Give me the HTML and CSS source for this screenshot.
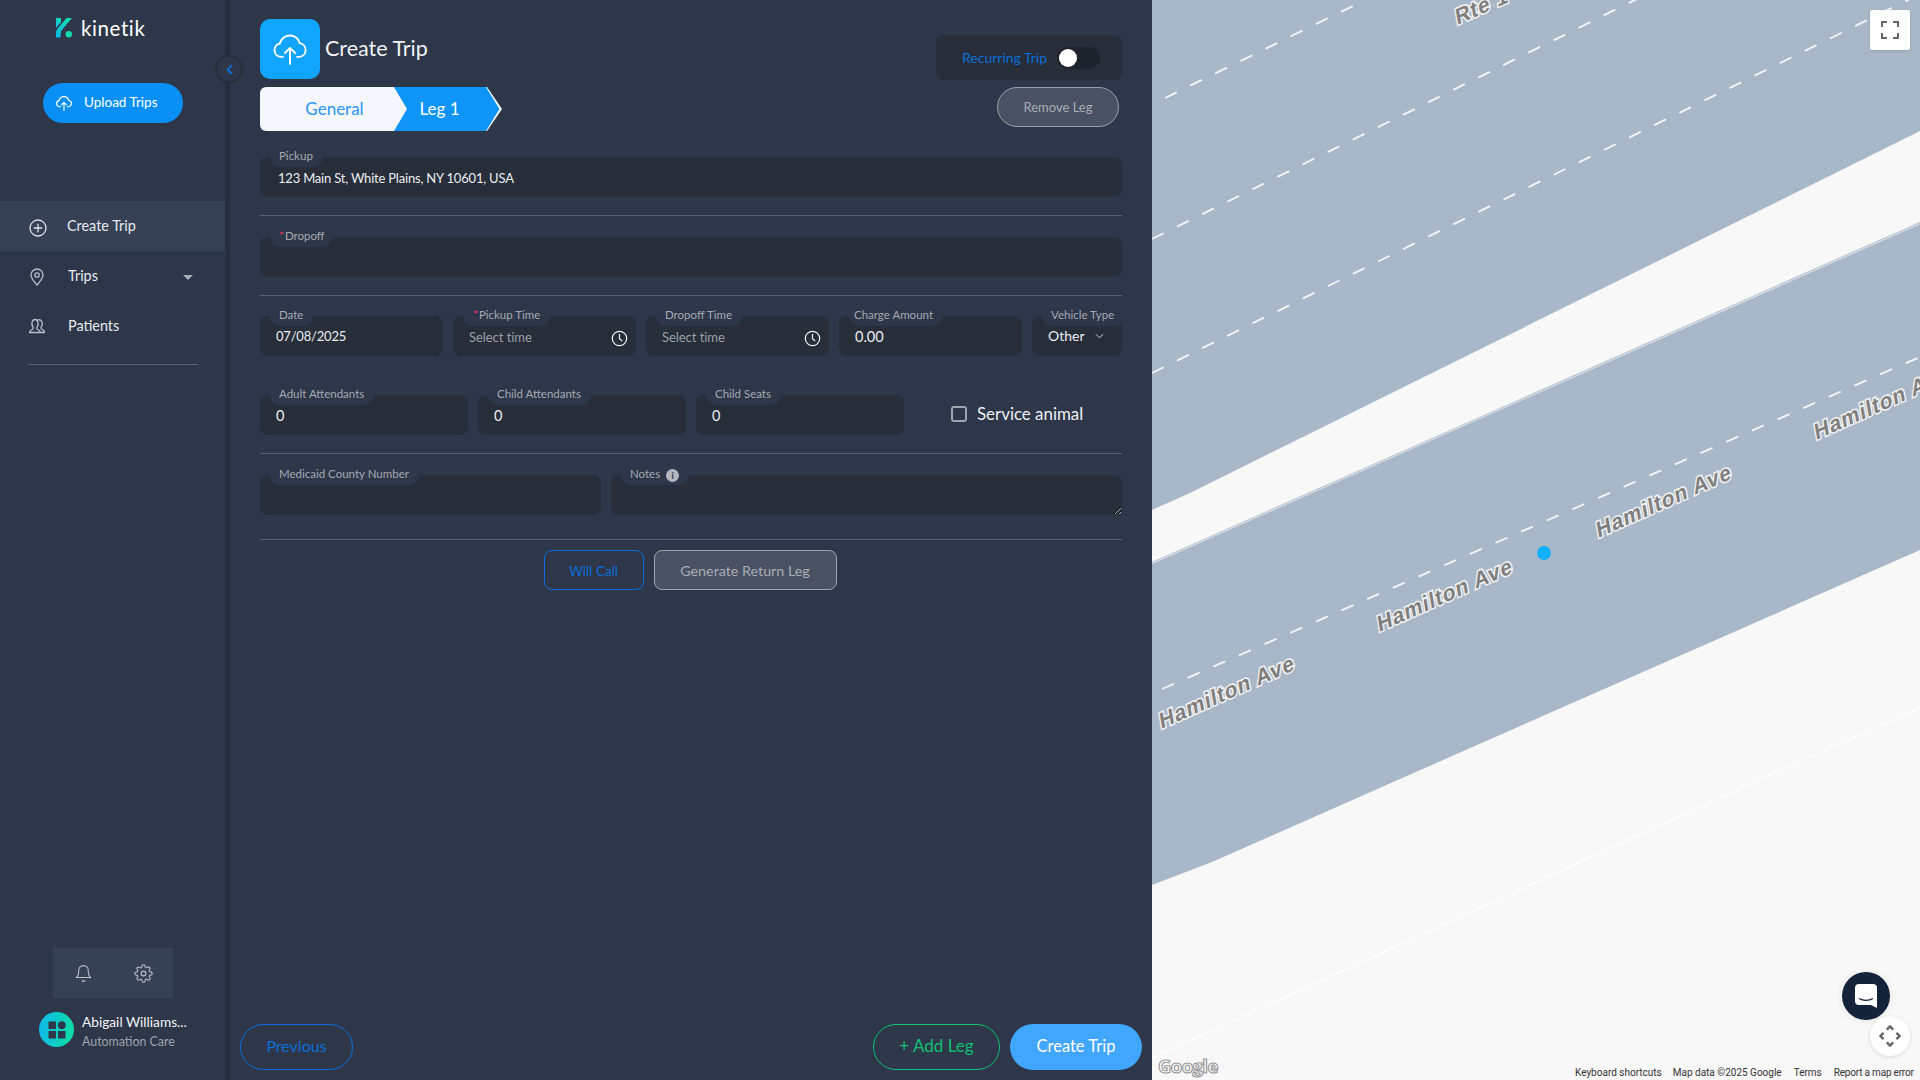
FILE: index.html
```html
<!DOCTYPE html>
<html lang="en">
<head>
<meta charset="utf-8">
<title>Create Trip</title>
<link rel="stylesheet" href="styles.css">
</head>
<body>
<div class="app">
  <aside class="sidebar">
    <div class="logo">
      <svg class="logo-mark" viewBox="0 0 16 20" width="16" height="20">
        <defs><linearGradient id="lg" x1="0" y1="0" x2="0" y2="1"><stop offset="0" stop-color="#10e0b0"/><stop offset="1" stop-color="#10b4e8"/></linearGradient></defs>
        <path d="M0 0h5v4.500L0 10z" fill="url(#lg)"/>
        <path d="M10.500 0H16L5.500 12.500C4.800 13.500 4.600 16 4.600 19.500H0V15.500C0 13 1 11.200 2.600 9.600z" fill="url(#lg)"/>
        <circle cx="12.800" cy="16.200" r="3.200" fill="#10dcb0"/>
      </svg>
      <span class="logo-text">kinetik</span>
    </div>
    <button class="upload-btn">
      <svg viewBox="0 0 24 24" width="18" height="18" class="ico"><path d="M7.500 17H6.300a4.300 4.300 0 0 1-.7-8.500 6.500 6.500 0 0 1 12.600-.2A4.400 4.400 0 0 1 18 17h-1.500"/><path d="M12 21.500V11.500M8.800 14.500 12 11.300l3.200 3.200"/></svg>
      <span>Upload Trips</span>
    </button>
    <nav class="nav">
      <a class="nav-item active">
        <svg viewBox="0 0 18 18" width="18" height="18" class="ico nav-ico plus"><circle cx="9" cy="9" r="8"/><path d="M9 5.200v7.600M5.200 9h7.600"/></svg>
        <span>Create Trip</span>
      </a>
      <a class="nav-item">
        <svg viewBox="0 0 18 18" width="18" height="18" class="ico nav-ico pin"><path d="M9 17c-3-3.600-6-6.500-6-10a6 6 0 0 1 12 0c0 3.500-3 6.400-6 10z"/><circle cx="9" cy="7" r="2.200"/></svg>
        <span>Trips</span>
        <i class="caret"></i>
      </a>
      <a class="nav-item">
        <svg viewBox="0 0 18 18" width="18" height="18" class="ico nav-ico people"><path d="M1.500 15.500c0-2 1.800-2.500 3.500-3.500.5-.8.3-1.500-.3-2.300C3 7 4 2.500 7 2.500s4 4.500 2.300 7.200c-.6.800-.8 1.500-.3 2.300 1.700 1 3.500 1.500 3.500 3.500z"/><path d="M9.500 3c3-1 5 1 4.800 4-.1 1.400-.7 2.200-1.100 2.900-.4.800-.3 1.500.3 2.100 1.500.9 3 1.300 3 3.500h-3.500"/></svg>
        <span>Patients</span>
      </a>
    </nav>
    <div class="side-rule"></div>
    <div class="side-bottom">
      <div class="side-tools">
        <svg viewBox="0 0 24 24" width="19" height="19" class="ico tool"><path d="M18 8A6 6 0 0 0 6 8c0 7-3 9-3 9h18s-3-2-3-9"/><path d="M13.730 21a2 2 0 0 1-3.460 0"/></svg>
        <svg viewBox="0 0 24 24" width="19" height="19" class="ico tool"><path d="M12 15a3 3 0 1 0 0-6 3 3 0 0 0 0 6z"/><path d="M19.4 15a1.65 1.65 0 0 0 .33 1.82l.06.06a2 2 0 0 1 0 2.83 2 2 0 0 1-2.83 0l-.06-.06a1.65 1.65 0 0 0-1.82-.33 1.65 1.65 0 0 0-1 1.51V21a2 2 0 0 1-2 2 2 2 0 0 1-2-2v-.09A1.65 1.65 0 0 0 9 19.4a1.65 1.65 0 0 0-1.82.33l-.06.06a2 2 0 0 1-2.83 0 2 2 0 0 1 0-2.83l.06-.06a1.65 1.65 0 0 0 .33-1.82 1.65 1.65 0 0 0-1.51-1H3a2 2 0 0 1-2-2 2 2 0 0 1 2-2h.09A1.65 1.65 0 0 0 4.6 9a1.65 1.65 0 0 0-.33-1.82l-.06-.06a2 2 0 0 1 0-2.83 2 2 0 0 1 2.83 0l.06.06a1.65 1.65 0 0 0 1.82.33H9a1.65 1.65 0 0 0 1-1.51V3a2 2 0 0 1 2-2 2 2 0 0 1 2 2v.09a1.65 1.65 0 0 0 1 1.51 1.65 1.65 0 0 0 1.82-.33l.06-.06a2 2 0 0 1 2.83 0 2 2 0 0 1 0 2.83l-.06.06a1.65 1.65 0 0 0-.33 1.82V9a1.65 1.65 0 0 0 1.51 1H21a2 2 0 0 1 2 2 2 2 0 0 1-2 2h-.09a1.65 1.65 0 0 0-1.51 1z"/></svg>
      </div>
      <div class="user">
        <div class="avatar">
          <svg viewBox="0 0 18 18" width="18" height="18"><rect x="0.500" y="0.500" width="7.500" height="7.500" fill="#2e3749"/><circle cx="13.800" cy="4.200" r="3.900" fill="#2e3749"/><rect x="0.500" y="10" width="7.500" height="7.500" fill="#2e3749"/><rect x="10" y="10" width="7.500" height="7.500" fill="#2e3749"/></svg>
        </div>
        <div class="user-text">
          <div class="user-name">Abigail Williams...</div>
          <div class="user-org">Automation Care</div>
        </div>
      </div>
    </div>
    <button class="collapse" aria-label="Collapse"><svg viewBox="0 0 8 12" width="7" height="11"><path d="M6.500 1 2 6l4.500 5" fill="none" stroke="#0b6ed8" stroke-width="2.200"/></svg></button>
  </aside>

  <main class="panel">
    <div class="form">
      <header class="head">
        <div class="title-wrap">
          <div class="title-icon">
            <svg viewBox="0 0 24 24" width="38" height="38" class="ico"><path d="M7.500 17H6.300a4.300 4.300 0 0 1-.7-8.500 6.500 6.500 0 0 1 12.600-.2A4.400 4.400 0 0 1 18 17h-1.500" stroke-width="1.200"/><path d="M12 21.500V11.500M8.800 14.500 12 11.300l3.200 3.200" stroke-width="1.200"/></svg>
          </div>
          <h1 class="title">Create Trip</h1>
        </div>
        <div class="recurring">
          <span>Recurring Trip</span>
          <span class="toggle"><i class="knob"></i></span>
        </div>
      </header>
      <div class="tabs-row">
        <div class="tabs">
          <div class="tab tab-general">General</div>
          <div class="tab tab-leg"><span>Leg 1</span></div>
        </div>
        <button class="remove-leg">Remove Leg</button>
      </div>

      <div class="field first">
        <label class="lab">Pickup</label>
        <input class="inp inp-wide" value="123 Main St, White Plains, NY 10601, USA">
      </div>
      <div class="divider"></div>
      <div class="field">
        <label class="lab lab-drop"><b>*</b>Dropoff</label>
        <input class="inp inp-wide">
      </div>
      <div class="divider"></div>

      <div class="row row-a">
        <div class="field"><label class="lab">Date</label><input class="inp" value="07/08/2025"></div>
        <div class="field"><label class="lab lab-req"><b>*</b> Pickup Time</label><input class="inp inp-time" placeholder="Select time">
          <svg viewBox="0 0 18 18" width="17" height="17" class="ico clock"><circle cx="9" cy="9" r="7.600"/><path d="M9 4.500V9.300l2.500 2"/></svg></div>
        <div class="field"><label class="lab">Dropoff Time</label><input class="inp inp-time" placeholder="Select time">
          <svg viewBox="0 0 18 18" width="17" height="17" class="ico clock"><circle cx="9" cy="9" r="7.600"/><path d="M9 4.500V9.300l2.500 2"/></svg></div>
        <div class="field"><label class="lab lab-charge">Charge Amount</label><input class="inp inp-num" value="0.00"></div>
        <div class="field"><label class="lab">Vehicle Type</label><div class="inp select">Other
          <svg viewBox="0 0 10 6" width="9" height="6"><path d="M1 1l4 4 4-4" fill="none" stroke="#e4e6ea" stroke-width="1"/></svg></div></div>
      </div>

      <div class="row row-b">
        <div class="field"><label class="lab">Adult Attendants</label><input class="inp inp-num" value="0"></div>
        <div class="field"><label class="lab">Child Attendants</label><input class="inp inp-num" value="0"></div>
        <div class="field"><label class="lab">Child Seats</label><input class="inp inp-num" value="0"></div>
        <label class="check"><input type="checkbox" class="box"><span>Service animal</span></label>
      </div>
      <div class="divider"></div>

      <div class="row row-c">
        <div class="field"><label class="lab">Medicaid County Number</label><input class="inp"></div>
        <div class="field"><label class="lab lab-notes">Notes <i class="info">i</i></label><textarea class="inp area"></textarea></div>
      </div>
      <div class="divider tight"></div>

      <div class="actions">
        <button class="btn-willcall">Will Call</button>
        <button class="btn-return">Generate Return Leg</button>
      </div>
    </div>
    <footer class="foot">
      <button class="pill pill-prev">Previous</button>
      <div class="foot-right">
        <button class="pill pill-add">+ Add Leg</button>
        <button class="pill pill-create">Create Trip</button>
      </div>
    </footer>
  </main>

  <section class="map">
    <svg class="map-art" viewBox="0 0 768 1080" width="768" height="1080">
      <rect width="768" height="1080" fill="#a9b8c9"/>
      <path d="M0 510 38 493 768 131V222L0 562z" fill="#f8f8f8"/>
      <path d="M0 563.500 768 223.500" stroke="#dbe1e8" stroke-width="1.200" fill="none"/>
      <path d="M0 885 60 862 291 760 768 550V1080H0z" fill="#f8f8f8"/>
      <path d="M0 1058 88 1018 655 758 768 708" stroke="#fff" stroke-width="1.200" fill="none"/>
      <g class="dash">
        <path d="M13 98 205 4"/>
        <path d="M0 239 487 -2"/>
        <path d="M0 373 760 -2"/>
        <path d="M10 689 768 357"/>
      </g>
      <g class="road-text">
        <text transform="translate(9 729) rotate(-24) skewX(-14)">Hamilton Ave</text>
        <text transform="translate(227 632) rotate(-24) skewX(-14)">Hamilton Ave</text>
        <text transform="translate(446 538) rotate(-24) skewX(-14)">Hamilton Ave</text>
        <text transform="translate(664 440) rotate(-24) skewX(-14)">Hamilton Ave</text>
        <text transform="translate(305 25) rotate(-24) skewX(-14)">Rte 1</text>
      </g>
      <circle cx="392" cy="553" r="7" fill="#12b0ff"/>
    </svg>
    <button class="fullscreen" aria-label="Fullscreen"><svg viewBox="0 0 18 18" width="18" height="18"><path d="M0 6V0h6v2H2v4zM12 0h6v6h-2V2h-4zM0 12h2v4h4v2H0zM16 12h2v6h-6v-2h4z" fill="#666"/></svg></button>
    <button class="chat" aria-label="Chat"><svg viewBox="0 0 22 24" width="22" height="24"><path d="M4 0h14a4 4 0 0 1 4 4v20l-6-3H4a4 4 0 0 1-4-4V4a4 4 0 0 1 4-4z" fill="#fff"/><path d="M4 14.500c4 2.500 10 2.500 14 0" fill="none" stroke="#14233a" stroke-width="1.300"/></svg></button>
    <button class="pan" aria-label="Pan"><svg viewBox="0 0 24 24" width="22" height="22"><path d="M8.500 5 12 1.500 15.500 5M5 8.500 1.500 12 5 15.500M19 8.500 22.500 12 19 15.500M8.500 19 12 22.500 15.500 19" fill="none" stroke="#666" stroke-width="2.600"/></svg></button>
    <div class="google">Google</div>
    <div class="attr">
      <span class="a1">Keyboard shortcuts</span>
      <span class="a2">Map data ©2025 Google</span>
      <span class="a3">Terms</span>
      <span class="a4">Report a map error</span>
    </div>
  </section>
</div>
</body>
</html>
```
FILE: styles.css
```css
* { box-sizing: border-box; }
html, body { margin: 0; padding: 0; height: 100%; overflow: hidden; }
body { font-family: "Lato", "Noto Sans", sans-serif; background: #2e3749; color: #e8eaee; }
button, input, textarea { font-family: inherit; }
.app { display: flex; width: 1920px; height: 1080px; }
.ico { fill: none; stroke: currentColor; stroke-width: 1.500; stroke-linecap: round; stroke-linejoin: round; }

/* sidebar */
.sidebar { position: relative; width: 230px; flex: none; height: 100%; border-right: 5px solid #272e3b; background: #2e3749; display: flex; flex-direction: column; }
.logo { display: flex; align-items: center; gap: 9px; margin: 18px 0 0 56px; height: 20px; }
.logo-mark { flex: none; }
.logo-text { font-size: 20.500px; font-weight: 400; color: #fff; letter-spacing: .6px; line-height: 20px; }
.upload-btn { margin: 45px 0 0 43px; width: 140px; height: 40px; border: 0; border-radius: 20px; background: #0a90f5; color: #fff; font-size: 13.500px; display: flex; align-items: center; padding: 0 0 0 12px; gap: 11px; }
.upload-btn span { position: relative; top: -1px; }
.nav { margin-top: 78px; display: flex; flex-direction: column; }
.nav-item { display: flex; align-items: center; height: 50px; padding-left: 28px; font-size: 14.400px; color: #e8eaee; position: relative; }
.nav-item.active { background: #364156; }
.nav-item span { margin-left: 22px; position: relative; top: -1px; }
.nav-ico { flex: none; color: #dfe2e7; stroke-width: 1.300; position: relative; top: 1px; }
.nav-item .plus { top: 2px; left: 1px; }
.nav-item .plus + span { margin-left: 21px; }
.nav-item .pin { color: #b9bec7; }
.nav-item .people { color: #b9bec7; top: 0; }
.caret { position: absolute; left: 183px; top: 24px; border-left: 5px solid transparent; border-right: 5px solid transparent; border-top: 5px solid #a8adb6; }
.side-rule { margin: 13px 0 0 28px; width: 170px; height: 1px; background: #5a6172; }
.side-bottom { margin-top: auto; display: flex; flex-direction: column; }
.side-tools { margin-left: 53px; width: 120px; height: 50px; background: #364156; display: flex; align-items: center; justify-content: space-around; color: #bcc0c8; }
.tool { stroke-width: 1.400; }
.user { display: flex; align-items: center; margin: 14px 0 0 39px; height: 35px; margin-bottom: 33px; }
.avatar { width: 35px; height: 35px; flex: none; border-radius: 50%; background: linear-gradient(100deg, #10b7ee, #0ae0a0); display: flex; align-items: center; justify-content: center; }
.user-text { margin-left: 8px; white-space: nowrap; }
.user-name { font-size: 13.700px; color: #f2f3f5; line-height: 20px; margin-top: 3px; }
.user-org { font-size: 12.400px; color: #9ea3ad; line-height: 19px; margin-top: 0; }
.collapse { position: absolute; left: 215px; top: 55px; width: 28px; height: 28px; padding: 0; border-radius: 50%; background: #2e3749; border: 2px solid #272e3b; display: flex; align-items: center; justify-content: center; }

/* panel */
.panel { width: 922px; flex: none; height: 100%; padding: 0 10px 10px; display: flex; flex-direction: column; background: #2e3749; }
.form { padding: 0 20px; }
.head { display: flex; justify-content: space-between; align-items: flex-start; padding-top: 19px; height: 79px; }
.title-wrap { display: flex; align-items: center; }
.title-icon { width: 60px; height: 60px; border-radius: 10px; background: #12a5ff; display: flex; align-items: center; justify-content: center; color: #fff; }
.title { margin: 0 0 0 5px; font-size: 21.500px; font-weight: 400; color: #f0f2f5; position: relative; top: -1.500px; }
.recurring { margin-top: 16px; width: 186px; height: 45px; border-radius: 8px; background: #272d39; display: flex; align-items: center; padding-left: 26px; gap: 10px; font-size: 14px; color: #0b6ed8; }
.toggle { display: block; position: relative; width: 43px; height: 22px; border-radius: 11px; background: #1e232d; }
.knob { position: absolute; left: 2px; top: 2px; width: 18px; height: 18px; border-radius: 50%; background: #fff; }

.tabs-row { display: flex; justify-content: space-between; align-items: flex-start; margin-top: 8px; }
.tabs { display: flex; height: 44px; }
.tab { height: 44px; display: flex; align-items: center; justify-content: center; font-size: 17px; }
.tab-general { position: relative; z-index: 1; width: 147px; padding-left: 2px; border-radius: 6px 0 0 6px; background: #f5f7fc; color: #2b95f5; clip-path: polygon(0 0, 134px 0, 147px 50%, 134px 100%, 0 100%); }
.tab-general, .tab-leg span { padding-bottom: 2px; }
.tab-leg { position: relative; margin-left: -13px; width: 108px; color: #fff; background: #fff; clip-path: polygon(0 0, 93px 0, 108px 50%, 93px 100%, 0 100%); }
.tab-leg::before { content: ""; position: absolute; inset: 0; background: #0f94f8; clip-path: polygon(0 0, 92px 0, 105.500px 50%, 92px 100%, 0 100%); }
.tab-leg span { position: relative; margin-right: 17px; }
.remove-leg { margin-right: 3px; width: 122px; height: 40px; border-radius: 20px; background: #4a5163; border: 1px solid #9aa0ab; color: #a8acb5; font-size: 13px; padding: 0; }

.field { position: relative; height: 40px; }
.field.first { margin-top: 26px; }
.lab { position: absolute; left: 10px; top: -9px; height: 19px; padding: 0 10px 3px 9px; background: #2e3749; border-radius: 0 0 10px 10px; font-size: 11.500px; line-height: 16px; color: #a5a9b2; white-space: nowrap; display: flex; align-items: center; }
.lab b { color: #e0305f; font-weight: 400; margin-right: 1px; }
.lab-drop { padding-right: 8px; }
.lab-req { padding-left: 10px; }
.lab-charge { padding-left: 5px; }
.inp { display: block; width: 100%; height: 40px; border: 0; outline: 0; border-radius: 8px; background: #272d39; color: #eceef1; font-size: 13px; letter-spacing: -.2px; padding: 0 0 0 16px; }
.inp-wide { padding: 1px 0 0 18px; letter-spacing: -.2px; }
.inp-time { letter-spacing: -.05px; padding-top: 1px; }
.inp-num { font-size: 14.500px; letter-spacing: 0; padding-top: 1px; }
.inp::placeholder { color: #9a9fa9; opacity: 1; }
.clock { position: absolute; right: 8px; top: 14px; color: #eef0f3; stroke-width: 1.300; }
.select { display: flex; align-items: center; gap: 10px; padding: 0 0 1px 16px; font-size: 14px; letter-spacing: 0; }
.area { resize: vertical; min-height: 40px; }
.divider { height: 1px; background: #5a6172; margin: 18px 0 21px; }
.divider.tight { margin: 24px 0 10px; }
.row { display: grid; gap: 10px; }
.row-a { grid-template-columns: 183px 183px 183px 183px 90px; margin-top: -1px; }
.row-b { grid-template-columns: 208px 208px 208px 1fr; margin-top: 39px; }
.row-c { grid-template-columns: 341px 1fr; }
.check { display: flex; align-items: center; padding-left: 37px; font-size: 16.900px; color: #eef0f3; gap: 10px; height: 40px; }
.check span { position: relative; top: -2px; }
.box { appearance: none; margin: 0 0 2px; width: 16px; height: 16px; border: 2px solid #9ea3ad; border-radius: 3px; background: transparent; }
.lab-notes { gap: 6px; }
.info { display: inline-flex; width: 13px; height: 13px; border-radius: 50%; background: #b4b7bf; color: #2e3749; font-size: 9px; font-style: normal; font-weight: 700; align-items: center; justify-content: center; position: relative; top: 1.500px; }
.actions { display: flex; justify-content: center; gap: 10px; padding-right: 2px; }
.btn-willcall { width: 100px; height: 40px; border-radius: 8px; background: transparent; border: 1px solid #0b6ed8; color: #0b6ed8; font-size: 13.500px; padding: 1px 0 0; }
.btn-return { width: 183px; height: 40px; border-radius: 8px; background: #4a5163; border: 1px solid #a0a4ad; color: #a8acb5; font-size: 14.300px; padding: 0; }

.foot { margin-top: auto; display: flex; justify-content: space-between; }
.foot-right { display: flex; gap: 10px; }
.pill { height: 46px; border-radius: 23px; font-size: 16px; padding: 0 0 3px; background: transparent; }
.pill-prev { width: 113px; border: 1px solid #0b6ed8; color: #0b6ed8; }
.pill-add { width: 127px; border: 1px solid #0fbf74; color: #0fbf74; font-size: 17px; }
.pill-create { width: 132px; border: 0; background: #40a6ff; color: #fff; font-size: 16.500px; }

/* map */
.map { position: relative; width: 768px; flex: none; height: 100%; overflow: hidden; background: #f8f8f8; }
.map-art { display: block; }
.dash path { fill: none; stroke: #f3f5f7; stroke-width: 1.900; stroke-dasharray: 13 15; }
.road-text text { font-family: "Liberation Sans", Arial, sans-serif; font-weight: 700; font-size: 21.500px; letter-spacing: .95px; fill: #7f7f7f; stroke: #f3f3f3; stroke-width: 3px; paint-order: stroke; }
.fullscreen { position: absolute; right: 10px; top: 10px; width: 40px; height: 40px; padding: 0; border: 0; border-radius: 2px; background: #fff; display: flex; align-items: center; justify-content: center; box-shadow: 0 1px 3px rgba(0,0,0,.15); }
.chat { position: absolute; left: 690px; top: 972px; width: 48px; height: 48px; padding: 0; border: 0; border-radius: 50%; background: #14233a; display: flex; align-items: center; justify-content: center; box-shadow: 0 1px 8px rgba(0,0,0,.08); }
.pan { position: absolute; left: 718px; top: 1016px; width: 40px; height: 40px; padding: 0; border: 0; border-radius: 50%; background: #fff; display: flex; align-items: center; justify-content: center; box-shadow: 0 1px 4px rgba(0,0,0,.12); }
.google { position: absolute; left: 6px; top: 1054px; font-family: "Open Sans", sans-serif; font-size: 18.500px; font-weight: 700; letter-spacing: -.6px; color: #fff; -webkit-text-stroke: 1.200px #9a9a9a; line-height: 24px; }
.attr { position: absolute; left: 423px; top: 1067px; width: 345px; height: 12px; display: flex; font-family: Roboto, sans-serif; font-size: 10px; line-height: 12px; color: #333; white-space: nowrap; }
.a2 { margin-left: 11px; }
.a3 { margin-left: 12px; }
.a4 { margin-left: 12px; letter-spacing: -.2px; }
```
